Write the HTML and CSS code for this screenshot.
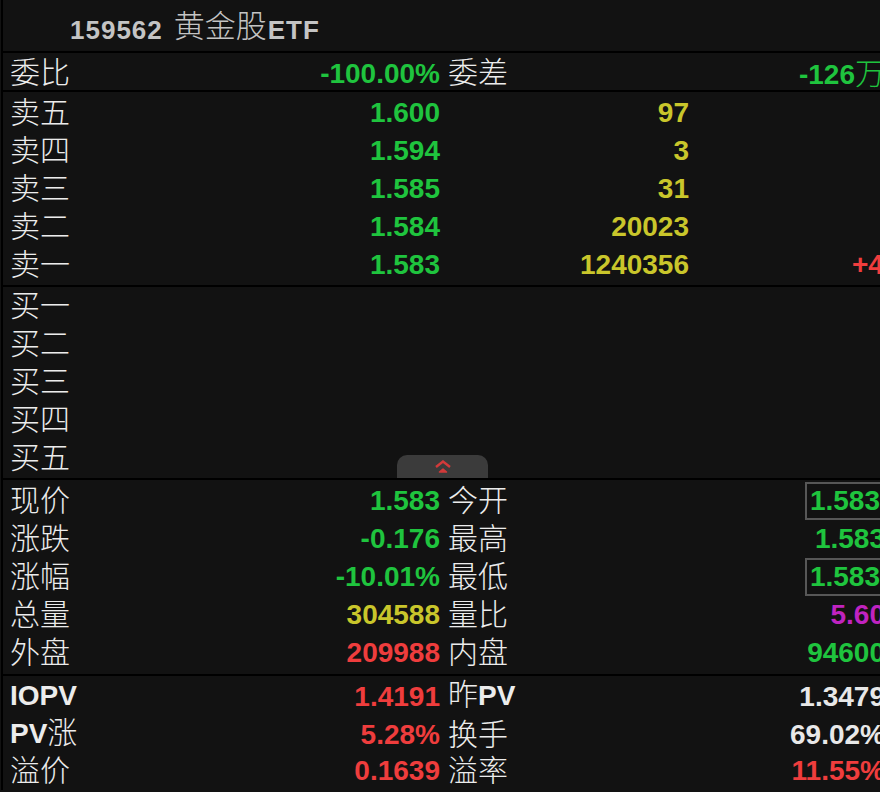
FILE: index.html
```html
<!DOCTYPE html>
<html lang="zh-CN">
<head>
  <meta charset="UTF-8">
  <title>159562 黄金股ETF</title>
  <link rel="stylesheet" href="styles.css">
</head>
<body>
  <div class="panel">

    <!-- Title -->
    <div class="header">
      <span class="code">159562</span><span class="cn-title">黄金股</span><span class="code">ETF</span>
    </div>

    <!-- Order ratio -->
    <div class="section sec-ratio">
      <div class="row info-row">
        <div class="cell"><span class="label">委比</span><span class="num green">-100.00%</span></div>
        <div class="cell"><span class="label">委差</span><span class="num green">-126<span class="unit">万</span></span></div>
      </div>
    </div>

    <!-- Sell side -->
    <div class="section sec-sell">
      <div class="row book-row">
        <div class="cell"><span class="label">卖五</span><span class="num green">1.600</span></div>
        <div class="vol num yellow">97</div>
        <div class="extra"></div>
      </div>
      <div class="row book-row">
        <div class="cell"><span class="label">卖四</span><span class="num green">1.594</span></div>
        <div class="vol num yellow">3</div>
        <div class="extra"></div>
      </div>
      <div class="row book-row">
        <div class="cell"><span class="label">卖三</span><span class="num green">1.585</span></div>
        <div class="vol num yellow">31</div>
        <div class="extra"></div>
      </div>
      <div class="row book-row">
        <div class="cell"><span class="label">卖二</span><span class="num green">1.584</span></div>
        <div class="vol num yellow">20023</div>
        <div class="extra"></div>
      </div>
      <div class="row book-row">
        <div class="cell"><span class="label">卖一</span><span class="num green">1.583</span></div>
        <div class="vol num yellow">1240356</div>
        <div class="extra num red">+4</div>
      </div>
    </div>

    <!-- Buy side (empty) -->
    <div class="section sec-buy">
      <div class="row book-row"><div class="cell"><span class="label">买一</span></div></div>
      <div class="row book-row"><div class="cell"><span class="label">买二</span></div></div>
      <div class="row book-row"><div class="cell"><span class="label">买三</span></div></div>
      <div class="row book-row"><div class="cell"><span class="label">买四</span></div></div>
      <div class="row book-row"><div class="cell"><span class="label">买五</span></div></div>

      <div class="fold-tab">
        <svg width="20" height="14" viewBox="0 0 20 14">
          <path d="M3 7 L10 1.5 L17 7" fill="none" stroke="#d23a3a" stroke-width="2.4"/>
          <path d="M6.5 12 L10 9 L13.5 12 Z" fill="#d23a3a" stroke="#d23a3a" stroke-width="1.6" stroke-linejoin="round"/>
        </svg>
      </div>
    </div>

    <!-- Quote -->
    <div class="section sec-quote">
      <div class="row info-row">
        <div class="cell"><span class="label">现价</span><span class="num green">1.583</span></div>
        <div class="cell"><span class="label">今开</span><span class="num green boxed">1.583</span></div>
      </div>
      <div class="row info-row">
        <div class="cell"><span class="label">涨跌</span><span class="num green">-0.176</span></div>
        <div class="cell"><span class="label">最高</span><span class="num green">1.583</span></div>
      </div>
      <div class="row info-row">
        <div class="cell"><span class="label">涨幅</span><span class="num green">-10.01%</span></div>
        <div class="cell"><span class="label">最低</span><span class="num green boxed">1.583</span></div>
      </div>
      <div class="row info-row">
        <div class="cell"><span class="label">总量</span><span class="num yellow">304588</span></div>
        <div class="cell"><span class="label">量比</span><span class="num magenta">5.60</span></div>
      </div>
      <div class="row info-row">
        <div class="cell"><span class="label">外盘</span><span class="num red">209988</span></div>
        <div class="cell"><span class="label">内盘</span><span class="num green">94600</span></div>
      </div>
    </div>

    <!-- ETF -->
    <div class="section sec-etf">
      <div class="row info-row">
        <div class="cell"><span class="label"><b class="latin">IOPV</b></span><span class="num red">1.4191</span></div>
        <div class="cell"><span class="label">昨<b class="latin">PV</b></span><span class="num white">1.3479</span></div>
      </div>
      <div class="row info-row">
        <div class="cell"><span class="label"><b class="latin">PV</b>涨</span><span class="num red">5.28%</span></div>
        <div class="cell"><span class="label">换手</span><span class="num white">69.02%</span></div>
      </div>
      <div class="row info-row">
        <div class="cell"><span class="label">溢价</span><span class="num red">0.1639</span></div>
        <div class="cell"><span class="label">溢率</span><span class="num red">11.55%</span></div>
      </div>
    </div>

  </div>
</body>
</html>
```

FILE: styles.css
```css
html, body {
  margin: 0;
  background-color: #121212;
  overflow: hidden;
}
body {
  width: 880px;
  height: 792px;
}
.panel {
  width: 886px;
  margin-left: 1px;
  border-left: 2px solid #000;
  font-family: "Noto Sans CJK SC", "Liberation Sans", sans-serif;
  color: #e6e6e6;
}
/* Title */
.header {
  height: 51px;
  line-height: 51px;
  padding-left: 67px;
  border-bottom: 2px solid #000;
  color: #c4c4c4;
  white-space: nowrap;
}
.header .code {
  font-family: "Liberation Sans", sans-serif;
  font-weight: bold;
  font-size: 26px;
  letter-spacing: 1px;
}
.header .cn-title {
  font-size: 31px;
  font-weight: 300;
  margin-left: 11px;
  margin-right: 1px;
  position: relative;
  top: -2px;
}
/* Sections */
.section {
  border-bottom: 2px solid #000;
  padding-left: 7px;
}
.sec-ratio {
  height: 37px;
}
.sec-ratio .row {
  height: 37px;
  line-height: 37px;
}
.sec-sell {
  padding-top: 2px;
  padding-bottom: 1px;
}
.sec-buy {
  position: relative;
  padding-bottom: 1px;
}
.sec-quote {
  padding-top: 2px;
  padding-bottom: 2px;
}
.sec-etf {
  border-bottom: none;
}
/* Rows */
.row {
  height: 38px;
  line-height: 38px;
  white-space: nowrap;
}
.info-row {
  display: grid;
  grid-template-columns: 430px 437px;
  column-gap: 8px;
}
.book-row {
  display: grid;
  grid-template-columns: 430px 249px 1fr;
}
.cell {
  display: flex;
  justify-content: space-between;
  align-items: center;
}
.label {
  font-size: 30px;
  font-weight: 300;
  color: #ececec;
  position: relative;
  top: -3px;
}
.label .latin {
  font-family: "Liberation Sans", sans-serif;
  font-weight: bold;
  font-size: 28px;
}
.num {
  font-family: "Liberation Sans", sans-serif;
  font-weight: bold;
  font-size: 28px;
}
.unit {
  font-family: "Noto Sans CJK SC", sans-serif;
  font-weight: 300;
  font-size: 30px;
}
.vol {
  text-align: right;
}
.extra {
  padding-left: 163px;
}
.boxed {
  border: 2px solid #575757;
  padding: 0 3px 0 3px;
  line-height: 34px;
  height: 34px;
}
/* Colours */
.green { color: #1fc43e; }
.yellow { color: #c9c62b; }
.red { color: #ef3d3d; }
.magenta { color: #c023c0; }
.white { color: #e8e8e8; }
/* Collapse tab */
.fold-tab {
  position: absolute;
  left: 394px;
  bottom: 0;
  width: 91px;
  height: 23px;
  background-color: #3b3b3b;
  border-radius: 10px 10px 0 0;
  display: flex;
  justify-content: center;
  align-items: center;
}
```
